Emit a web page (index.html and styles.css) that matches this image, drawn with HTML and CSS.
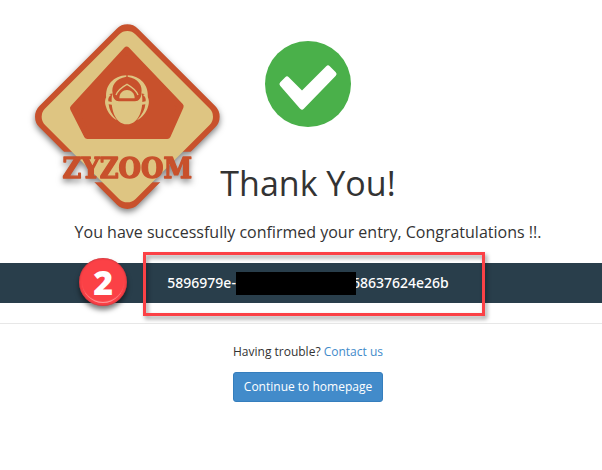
FILE: index.html
```html
<!DOCTYPE html>
<html lang="en">
<head>
    <meta charset="UTF-8">
    <meta name="viewport" content="width=device-width, initial-scale=1.0">
    <title>Thank You!</title>
    <link rel="stylesheet" href="styles.css">
</head>
<body>
    <svg class="logo" viewBox="0 0 615 615" role="img" aria-label="Zyzoom">
        <defs>
            <clipPath id="band">
                <path d="M0 0H615V410H0ZM0 502H615V615H0Z"/>
            </clipPath>
        </defs>
        <g clip-path="url(#band)">
            <rect x="98" y="96" width="418" height="418" rx="45" fill="#c8512c" transform="rotate(45 307 305)"/>
        </g>
        <rect x="115" y="113" width="384" height="384" rx="35" fill="#dec582" transform="rotate(45 307 305)"/>
        <path d="M305 105L466 274L427 362H187L145 280Z" fill="#c8512c" stroke="#c8512c" stroke-width="20" stroke-linejoin="round"/>
        <!-- scarab -->
        <g fill="#dec582">
            <path d="M304 181C266 182 239 212 244 250C250 240 256 235 263 236C258 212 272 190 304 185Z"/>
            <path d="M308 181C346 182 373 212 368 250C362 240 356 235 349 236C354 212 340 190 308 185Z"/>
            <path d="M262 234C264 250 270 258 282 259H330C342 258 348 250 350 234C358 278 343 328 306 328C269 328 254 278 262 234Z"/>
            <path d="M252 238C239 246 238 263 243 275C248 293 261 308 276 316C260 299 252 283 251 268L266 270L264 262L250 259C249 250 251 245 258 240Z"/>
            <path d="M360 238C373 246 374 263 369 275C364 293 351 308 336 316C352 299 360 283 361 268L346 270L348 262L362 259C363 250 361 245 354 240Z"/>
            <path d="M283 250C283 234 294 225 306 225C318 225 329 234 329 250Z"/>
        </g>
        <path d="M273 240Q280 222 306 208Q332 222 339 240" fill="none" stroke="#dec582" stroke-width="4"/>
        <text class="logo-text" x="307" y="490" text-anchor="middle">ZYZOOM</text>
    </svg>

    <main class="confirm">
        <svg class="check" viewBox="0 0 86 86" aria-hidden="true">
            <circle cx="43" cy="43" r="43" fill="#4ab04a"/>
            <path d="M17 43L22 38L37 53L63 27L69 33L37 66Z" fill="#fff" stroke="#fff" stroke-width="5" stroke-linejoin="round"/>
        </svg>
        <h1>Thank You!</h1>
        <p class="message">You have successfully confirmed your entry, Congratulations !!.</p>
        <div class="key-bar">
            <div class="key">5896979e-<span class="redacted"></span>68637624e26b
                <span class="frame"></span>
                <span class="step">2</span>
            </div>
        </div>
        <hr>
        <p class="trouble">Having trouble? <a href="#">Contact us</a></p>
        <button type="button" class="home">Continue to homepage</button>
    </main>
</body>
</html>
```
FILE: styles.css
```css
body {
    margin: 0;
    background-color: #fff;
    color: #333;
    font-family: "Open Sans", "Noto Sans", sans-serif;
}
.logo {
    position: absolute;
    left: 25px;
    top: 15px;
    width: 205px;
    height: 205px;
    filter: drop-shadow(0 3px 3px rgba(0, 0, 0, 0.5));
}
.logo-text {
    font-family: "DejaVu Serif Condensed", "DejaVu Serif", serif;
    font-size: 86px;
    font-weight: bold;
    fill: #c8512c;
    stroke: #c8512c;
    stroke-width: 4px;
    stroke-linejoin: round;
}
.confirm {
    display: flex;
    flex-direction: column;
    align-items: center;
    padding-top: 41px;
}
.check, h1, .message, .key, .trouble, .home {
    margin-left: 14px;
}
.check {
    width: 86px;
    height: 86px;
}
h1 {
    margin-top: 36px;
    margin-bottom: 0;
    font-size: 34px;
    font-weight: normal;
    line-height: 40px;
}
.message {
    margin-top: 17px;
    margin-bottom: 0;
    font-size: 16px;
    line-height: 24px;
}
.key-bar {
    display: flex;
    justify-content: center;
    width: 100%;
    margin-top: 19px;
    background-color: #293e4b;
}
.key {
    position: relative;
    display: flex;
    align-items: center;
    color: #fff;
    font-family: "Noto Sans", sans-serif;
    font-size: 14px;
    font-weight: 500;
    line-height: 40px;
}
.redacted {
    z-index: 1;
    width: 120px;
    height: 23px;
    margin-right: -4px;
    background-color: #000;
}
.frame {
    position: absolute;
    inset: -11px -36px -13px -24px;
    border: 3px solid #fb4146;
    filter: drop-shadow(2px 3px 2px rgba(0, 0, 0, 0.4));
}
.step {
    position: absolute;
    left: -88px;
    top: -5px;
    width: 48px;
    height: 48px;
    border-radius: 50%;
    background-color: #fb4146;
    box-shadow: 0 4px 5px rgba(0, 0, 0, 0.5), inset 0 0 2px #a02b35;
    font-family: "Open Sans", sans-serif;
    font-size: 34px;
    font-weight: 800;
    line-height: 48px;
    text-align: center;
}
.step::after {
    content: "";
    position: absolute;
    inset: 3px;
    border-radius: 50%;
    box-shadow: inset 0 -2px 1px -1px #ff9c9e;
}
hr {
    width: 100%;
    margin: 20px 0;
    border: 0;
    border-top: 1px solid #e7e7e7;
}
.trouble {
    margin-top: 0;
    margin-bottom: 12px;
    font-size: 12px;
    line-height: 16px;
}
.trouble a {
    color: #428bca;
    text-decoration: none;
}
.home {
    padding: 5px 10px;
    border: 1px solid #357ebd;
    border-radius: 3px;
    background-color: #428bca;
    color: #fff;
    font-family: inherit;
    font-size: 12px;
    line-height: 18px;
    cursor: pointer;
}
```
